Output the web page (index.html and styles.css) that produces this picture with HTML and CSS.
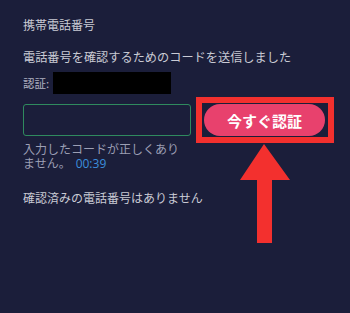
FILE: index.html
```html
<!DOCTYPE html>
<html lang="ja">
<head>
<meta charset="utf-8">
<link rel="stylesheet" href="styles.css">
</head>
<body>
<div class="panel">
  <div class="title">携帯電話番号</div>
  <div class="sent">電話番号を確認するためのコードを送信しました</div>
  <div class="auth"><span class="auth-label">認証:</span><span class="masked"></span></div>
  <div class="verify-row">
    <input class="code" type="text" aria-label="code">
    <div class="highlight"><button class="verify-btn">今すぐ認証</button></div>
  </div>
  <p class="error"><span class="line">入力したコードが正しくあり</span><span class="line">ません。<span class="timer">00:39</span></span></p>
  <p class="none">確認済みの電話番号はありません</p>
  <svg class="arrow" width="50" height="99" viewBox="0 0 50 99"><polygon points="24,0 50,36 32,36 32,99 17,99 17,36 0,36" fill="#f3302e"/></svg>
</div>
</body>
</html>
```
FILE: styles.css
```css
html, body {
  margin: 0;
  background: #1b1e3a;
}
body {
  width: 350px;
  height: 313px;
  overflow: hidden;
  font-family: "Noto Sans CJK JP", "Noto Sans", sans-serif;
}
.panel {
  position: relative;
  padding: 17px 0 0 23px;
  color: #c9cad4;
}
.title {
  font-size: 12px;
  line-height: 16px;
}
.sent {
  margin-top: 16px;
  font-size: 12.2px;
  line-height: 16px;
}
.auth {
  margin-top: 7px;
  display: flex;
  align-items: center;
  height: 22px;
  font-size: 11.5px;
  color: #aeb0c0;
}
.masked {
  display: block;
  width: 118px;
  height: 22px;
  margin-left: 4px;
  background: #000;
}
.verify-row {
  margin-top: 3px;
  display: flex;
  align-items: center;
  gap: 5px;
}
.code {
  box-sizing: border-box;
  width: 168px;
  height: 32px;
  margin: 0;
  border: 1px solid #2f8a5e;
  border-radius: 3px;
  background: transparent;
}
.highlight {
  box-sizing: border-box;
  width: 138px;
  height: 46px;
  border: 6px solid #f3302e;
  padding: 0 3px 0 2px;
  display: flex;
  align-items: center;
}
.verify-btn {
  width: 100%;
  height: 32px;
  border: none;
  border-radius: 16px;
  background: #e8416d;
  color: #fff;
  font-family: "Noto Sans CJK JP", sans-serif;
  font-weight: 700;
  font-size: 15px;
  padding: 0;
}
.error {
  margin: -1px 0 0;
  font-size: 12px;
  line-height: 14px;
  color: #9c9fb4;
}
.line {
  display: block;
}
.timer {
  display: inline-block;
  margin-left: 5px;
  color: #3b8fdc;
  font-family: "Open Sans", sans-serif;
  font-size: 12px;
  line-height: 14px;
}
.none {
  margin: 19px 0 0;
  font-size: 12px;
  line-height: 16px;
}
.arrow {
  position: absolute;
  left: 240px;
  top: 144px;
}
```
